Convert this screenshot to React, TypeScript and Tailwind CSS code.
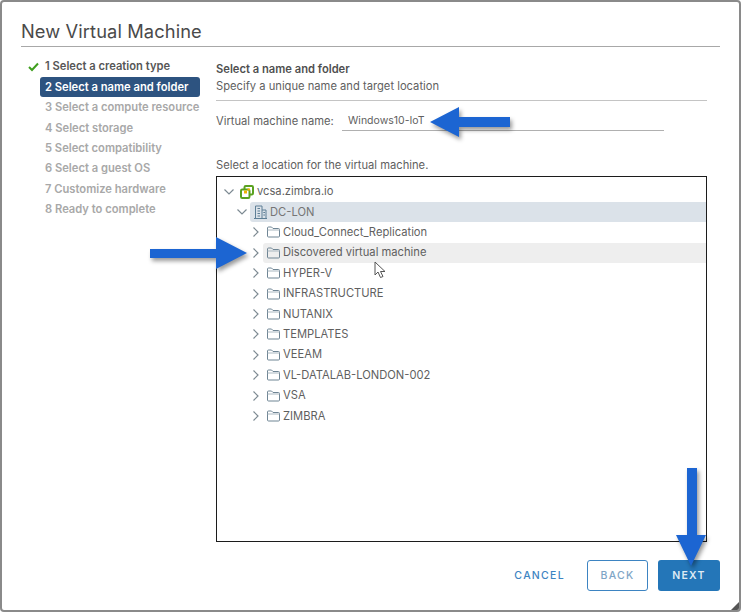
const steps = [
  "1 Select a creation type",
  "2 Select a name and folder",
  "3 Select a compute resource",
  "4 Select storage",
  "5 Select compatibility",
  "6 Select a guest OS",
  "7 Customize hardware",
  "8 Ready to complete",
];

const folders = [
  "Cloud_Connect_Replication",
  "Discovered virtual machine",
  "HYPER-V",
  "INFRASTRUCTURE",
  "NUTANIX",
  "TEMPLATES",
  "VEEAM",
  "VL-DATALAB-LONDON-002",
  "VSA",
  "ZIMBRA",
];

const Chevron = ({ open }: { open?: boolean }) => (
  <svg width="12" height="12" viewBox="0 0 12 12" fill="none" stroke="#7d8a92" strokeWidth="1.2" className="shrink-0">
    {open ? <path d="M1.5 3.5 L6 8 L10.5 3.5" /> : <path d="M3.5 1.5 L8 6 L3.5 10.5" />}
  </svg>
);

const FolderIcon = () => (
  <svg width="13" height="12" viewBox="0 0 13 12" fill="none" stroke="#6f8594" strokeWidth="1" className="shrink-0">
    <path d="M0.5 10 V2 Q0.5 1 1.5 1 H4.5 L6 2.5 H11.5 Q12.5 2.5 12.5 3.5 V10 Q12.5 11 11.5 11 H1.5 Q0.5 11 0.5 10 Z" />
    <path d="M0.5 4 H12.5" stroke="#a9b7c0" />
  </svg>
);

const VcenterIcon = () => (
  <svg width="14" height="14" viewBox="0 0 14 14" fill="none" className="shrink-0">
    <rect x="4.5" y="1" width="8.5" height="8.5" rx="1.2" stroke="#5aa220" strokeWidth="2" />
    <rect x="1" y="4.5" width="8.5" height="8.5" rx="1.2" stroke="#5aa220" strokeWidth="2" fill="#fff" />
    <rect x="4" y="5.5" width="3" height="3" fill="#efb300" />
    <rect x="7.5" y="3.5" width="2.5" height="2" fill="#efb300" />
  </svg>
);

const BuildingIcon = () => (
  <svg width="13" height="14" viewBox="0 0 13 14" fill="none" stroke="#5e7f96" strokeWidth="1" className="shrink-0">
    <path d="M1.5 13.5 V1 H8 V13.5 M8 5 H12 V13.5 M0 13.5 H13" />
    <path d="M3.5 3.5 H6 M3.5 6 H6 M3.5 8.5 H6 M3.5 11 H6 M9.3 7.5 H11 M9.3 10 H11" strokeWidth="1.2" />
  </svg>
);

const Arrow = ({ className, width, height, points }: { className: string; width: number; height: number; points: string }) => (
  <svg
    width={width}
    height={height}
    viewBox={`0 0 ${width} ${height}`}
    className={`absolute drop-shadow-[2px_3px_2px_rgba(0,0,0,0.4)] ${className}`}
  >
    <polygon points={points} fill="#1c65d2" />
  </svg>
);

export default function App() {
  return (
    <div className="relative w-[741px] h-[612px] bg-white border-2 border-[#8a8a8a] rounded-[4px] overflow-hidden font-['Inter',sans-serif] flex flex-col pl-[19px] pr-[19px] pt-[17px] text-[#5f5f5f]">
      <h1 className="h-[28px] border-b border-[#a8a8a8] text-[18.3px] leading-[24px] font-normal text-[#4a4a4a] tracking-[0.1px]">
        New Virtual Machine
      </h1>

      <div className="flex flex-1 min-h-0 mt-[9px]">
        <ol className="w-[195px] shrink-0 pt-[0.6px] pl-[7px] text-[11.2px] font-semibold">
          {steps.map((s, i) => (
            <li key={s} className="flex items-center h-[20.4px]">
              <span className="w-[17px] shrink-0">
                {i === 0 && (
                  <svg width="11" height="10" viewBox="0 0 11 10" fill="none" stroke="#3f9f1e" strokeWidth="2">
                    <path d="M1 5 L4 8 L10 1.5" />
                  </svg>
                )}
              </span>
              <span
                className={
                  i === 1
                    ? "h-[20px] w-[160px] -ml-[5px] pl-[5px] flex items-center rounded-[3px] bg-[#2d5380] text-white whitespace-nowrap"
                    : i === 0
                      ? "text-[#565656] whitespace-nowrap"
                      : "text-[#a8a8a8] whitespace-nowrap"
                }
              >
                {s}
              </span>
            </li>
          ))}
        </ol>

        <div className="flex flex-col flex-1 min-w-0 pr-[13px]">
          <h2 className="text-[11.2px] leading-[14px] font-semibold text-[#4f4f4f] mt-[6px]">Select a name and folder</h2>
          <p className="text-[11.2px] leading-[14px] mt-[3px]">Specify a unique name and target location</p>
          <div className="h-px bg-[#c4c4c4] mt-[7px]" />
          <div className="flex items-center mt-[11px] text-[11.2px]">
            <span className="w-[126px]">Virtual machine name:</span>
            <span className="w-[322px] h-[19px] pl-[6px] flex items-center border-b border-[#b0b0b0] text-[10.5px]">Windows10-IoT</span>
          </div>
          <p className="text-[11.2px] leading-[14px] mt-[27px]">Select a location for the virtual machine.</p>
          <div className="h-[366px] border border-[#1c1c1c] mt-[4px] pt-[4.5px] pl-[6px] flex flex-col text-[11.2px]">
            <div className="flex items-center h-[20.4px] gap-[5px]">
              <Chevron open />
              <VcenterIcon />
              <span className="-ml-[2px]">vcsa.zimbra.io</span>
            </div>
            <div className="flex items-center h-[20.4px] gap-[2px] pl-[13px]">
              <Chevron open />
              <div className="flex flex-1 h-[20px] items-center gap-[3px] pl-[4px] bg-[#dbe2e9] rounded-l-[3px] text-[#757575]">
                <BuildingIcon />
                <span>DC-LON</span>
              </div>
            </div>
            {folders.map((f, i) => (
              <div key={f} className="flex items-center h-[20.4px] gap-[1px] pl-[27px]">
                <Chevron />
                <div className={`flex flex-1 h-[20px] items-center gap-[3px] pl-[4px] rounded-l-[3px] ${i === 1 ? "bg-[#eeeeee]" : ""}`}>
                  <FolderIcon />
                  <span className="whitespace-nowrap">{f}</span>
                </div>
              </div>
            ))}
          </div>
        </div>
      </div>

      <div className="flex justify-end items-center h-[31px] mb-[19px] text-[10.5px] font-medium tracking-[1.3px]">
        <span className="text-[#3d84c2] mr-[22px]">CANCEL</span>
        <span className="w-[61px] h-[31px] mr-[10px] flex items-center justify-center rounded-[3px] border border-[#3d84c2] text-[#7ea5c6]">BACK</span>
        <span className="w-[62px] h-[31px] flex items-center justify-center rounded-[3px] bg-[#2476b8] text-[#dfeaf4] font-semibold">NEXT</span>
      </div>

      {/* annotation arrows */}
      <Arrow className="left-[428px] top-[105px]" width={82} height={32} points="0,15 29,0 29,10 80,10 80,20 29,20 29,30" />
      <Arrow className="left-[148px] top-[235px]" width={100} height={34} points="0,12 66,12 66,0 97,16 66,32 66,21 0,21" />
      <Arrow className="left-[674px] top-[466px]" width={34} height={104} points="11,0 21,0 21,67 30,67 15,98 0,67 11,67" />
      {/* pointer */}
      <svg width="14" height="18" viewBox="0 0 14 18" className="absolute left-[372px] top-[259px]">
        <path d="M1 1 V14 L4 11 L6.5 16.5 L9 15.5 L6.5 10.5 L11 10.5 Z" fill="#fff" stroke="#555" strokeWidth="1" />
      </svg>
      {/* resize grip */}
      <svg width="8" height="8" viewBox="0 0 8 8" className="absolute left-[729px] top-[600px]">
        <path d="M0 8 L8 0 V8 Z" fill="#555" />
      </svg>
    </div>
  );
}
